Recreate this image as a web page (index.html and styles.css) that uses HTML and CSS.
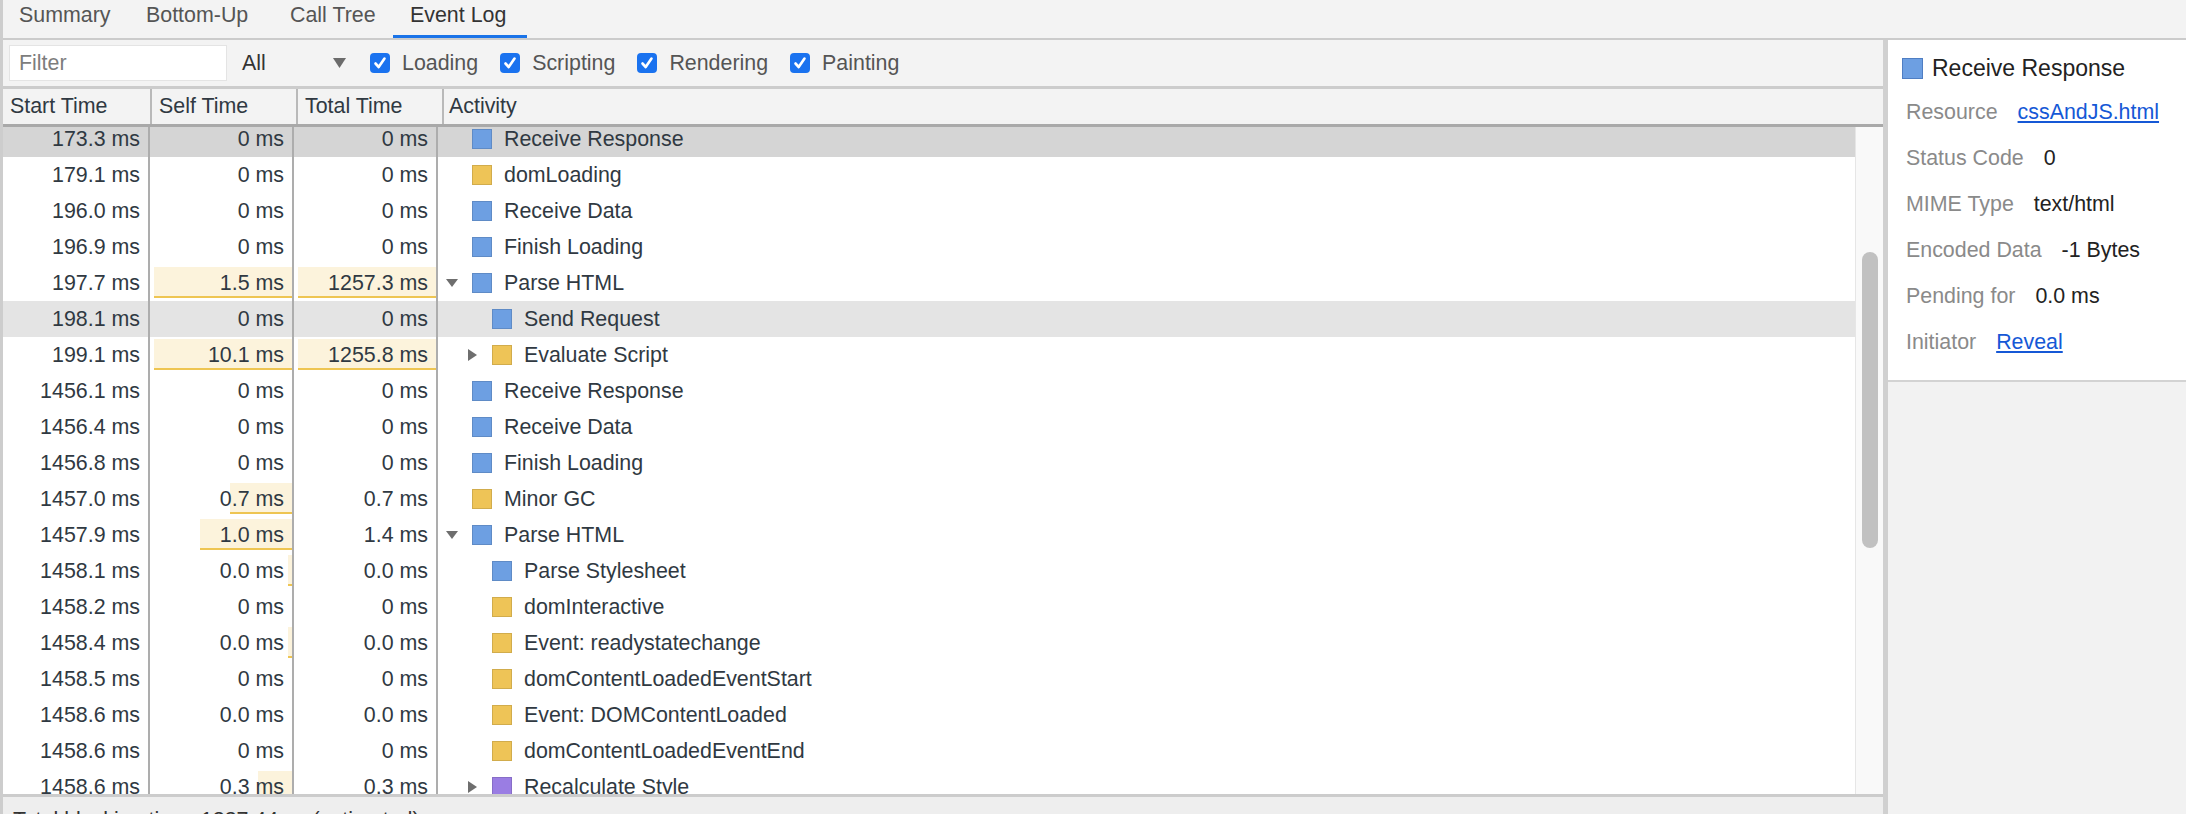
FILE: index.html
```html
<!DOCTYPE html>
<html>
<head>
<meta charset="utf-8">
<title>Event Log</title>
<link rel="stylesheet" href="styles.css">
</head>
<body>
<div class="app">
  <div class="tabbar">
    <div class="tab t-summary">Summary</div>
    <div class="tab t-bottom">Bottom-Up</div>
    <div class="tab t-call">Call Tree</div>
    <div class="tab t-event active">Event Log</div>
  </div>
  <div class="main">
    <div class="left">
      <div class="toolbar">
        <div class="filter">Filter</div>
        <div class="select"><span>All</span><svg width="13" height="10" viewBox="0 0 13 10"><polygon points="0,0 13,0 6.5,10" fill="#6b6b6b"/></svg></div>
        <label class="cb"><svg width="20" height="20" viewBox="0 0 20 20"><rect width="20" height="20" rx="4" fill="#1a72ef"/><path d="M5.5 10.5 L8.7 14 L14.5 5.5" fill="none" stroke="#fff" stroke-width="2.6" stroke-linecap="round" stroke-linejoin="round"/></svg><span>Loading</span></label>
        <label class="cb"><svg width="20" height="20" viewBox="0 0 20 20"><rect width="20" height="20" rx="4" fill="#1a72ef"/><path d="M5.5 10.5 L8.7 14 L14.5 5.5" fill="none" stroke="#fff" stroke-width="2.6" stroke-linecap="round" stroke-linejoin="round"/></svg><span>Scripting</span></label>
        <label class="cb"><svg width="20" height="20" viewBox="0 0 20 20"><rect width="20" height="20" rx="4" fill="#1a72ef"/><path d="M5.5 10.5 L8.7 14 L14.5 5.5" fill="none" stroke="#fff" stroke-width="2.6" stroke-linecap="round" stroke-linejoin="round"/></svg><span>Rendering</span></label>
        <label class="cb"><svg width="20" height="20" viewBox="0 0 20 20"><rect width="20" height="20" rx="4" fill="#1a72ef"/><path d="M5.5 10.5 L8.7 14 L14.5 5.5" fill="none" stroke="#fff" stroke-width="2.6" stroke-linecap="round" stroke-linejoin="round"/></svg><span>Painting</span></label>
      </div>
      <div class="ghead">
        <div class="hc">Start Time</div>
        <div class="hc">Self Time</div>
        <div class="hc">Total Time</div>
        <div class="hc last">Activity</div>
      </div>
      <div class="gbody">
        <div class="viewport">
          <div class="list">
            <div class="row sel"><div class="c">173.3 ms</div><div class="c">0 ms</div><div class="c">0 ms</div><div class="act d0"><span class="tw"></span><span class="sq load"></span><span class="nm">Receive Response</span></div></div>
            <div class="row"><div class="c">179.1 ms</div><div class="c">0 ms</div><div class="c">0 ms</div><div class="act d0"><span class="tw"></span><span class="sq script"></span><span class="nm">domLoading</span></div></div>
            <div class="row"><div class="c">196.0 ms</div><div class="c">0 ms</div><div class="c">0 ms</div><div class="act d0"><span class="tw"></span><span class="sq load"></span><span class="nm">Receive Data</span></div></div>
            <div class="row"><div class="c">196.9 ms</div><div class="c">0 ms</div><div class="c">0 ms</div><div class="act d0"><span class="tw"></span><span class="sq load"></span><span class="nm">Finish Loading</span></div></div>
            <div class="row"><div class="c">197.7 ms</div><div class="c"><span class="bar" style="width:138px"></span><span class="v">1.5 ms</span></div><div class="c"><span class="bar" style="width:138px"></span><span class="v">1257.3 ms</span></div><div class="act d0"><span class="tw"><svg width="12" height="8" viewBox="0 0 12 8"><polygon points="0,0 12,0 6,8" fill="#6e6e6e"/></svg></span><span class="sq load"></span><span class="nm">Parse HTML</span></div></div>
            <div class="row hov"><div class="c">198.1 ms</div><div class="c">0 ms</div><div class="c">0 ms</div><div class="act d1"><span class="tw"></span><span class="sq load"></span><span class="nm">Send Request</span></div></div>
            <div class="row"><div class="c">199.1 ms</div><div class="c"><span class="bar" style="width:138px"></span><span class="v">10.1 ms</span></div><div class="c"><span class="bar" style="width:138px"></span><span class="v">1255.8 ms</span></div><div class="act d1"><span class="tw"><svg width="9" height="12" viewBox="0 0 9 12"><polygon points="0,0 9,6 0,12" fill="#6e6e6e"/></svg></span><span class="sq script"></span><span class="nm">Evaluate Script</span></div></div>
            <div class="row"><div class="c">1456.1 ms</div><div class="c">0 ms</div><div class="c">0 ms</div><div class="act d0"><span class="tw"></span><span class="sq load"></span><span class="nm">Receive Response</span></div></div>
            <div class="row"><div class="c">1456.4 ms</div><div class="c">0 ms</div><div class="c">0 ms</div><div class="act d0"><span class="tw"></span><span class="sq load"></span><span class="nm">Receive Data</span></div></div>
            <div class="row"><div class="c">1456.8 ms</div><div class="c">0 ms</div><div class="c">0 ms</div><div class="act d0"><span class="tw"></span><span class="sq load"></span><span class="nm">Finish Loading</span></div></div>
            <div class="row"><div class="c">1457.0 ms</div><div class="c"><span class="bar" style="width:62px"></span><span class="v">0.7 ms</span></div><div class="c">0.7 ms</div><div class="act d0"><span class="tw"></span><span class="sq script"></span><span class="nm">Minor GC</span></div></div>
            <div class="row"><div class="c">1457.9 ms</div><div class="c"><span class="bar" style="width:92px"></span><span class="v">1.0 ms</span></div><div class="c">1.4 ms</div><div class="act d0"><span class="tw"><svg width="12" height="8" viewBox="0 0 12 8"><polygon points="0,0 12,0 6,8" fill="#6e6e6e"/></svg></span><span class="sq load"></span><span class="nm">Parse HTML</span></div></div>
            <div class="row"><div class="c">1458.1 ms</div><div class="c"><span class="bar" style="width:4px"></span><span class="v">0.0 ms</span></div><div class="c">0.0 ms</div><div class="act d1"><span class="tw"></span><span class="sq load"></span><span class="nm">Parse Stylesheet</span></div></div>
            <div class="row"><div class="c">1458.2 ms</div><div class="c">0 ms</div><div class="c">0 ms</div><div class="act d1"><span class="tw"></span><span class="sq script"></span><span class="nm">domInteractive</span></div></div>
            <div class="row"><div class="c">1458.4 ms</div><div class="c"><span class="bar" style="width:4px"></span><span class="v">0.0 ms</span></div><div class="c">0.0 ms</div><div class="act d1"><span class="tw"></span><span class="sq script"></span><span class="nm">Event: readystatechange</span></div></div>
            <div class="row"><div class="c">1458.5 ms</div><div class="c">0 ms</div><div class="c">0 ms</div><div class="act d1"><span class="tw"></span><span class="sq script"></span><span class="nm">domContentLoadedEventStart</span></div></div>
            <div class="row"><div class="c">1458.6 ms</div><div class="c">0.0 ms</div><div class="c">0.0 ms</div><div class="act d1"><span class="tw"></span><span class="sq script"></span><span class="nm">Event: DOMContentLoaded</span></div></div>
            <div class="row"><div class="c">1458.6 ms</div><div class="c">0 ms</div><div class="c">0 ms</div><div class="act d1"><span class="tw"></span><span class="sq script"></span><span class="nm">domContentLoadedEventEnd</span></div></div>
            <div class="row"><div class="c">1458.6 ms</div><div class="c"><span class="bar" style="width:34px"></span><span class="v">0.3 ms</span></div><div class="c">0.3 ms</div><div class="act d1"><span class="tw"><svg width="9" height="12" viewBox="0 0 9 12"><polygon points="0,0 9,6 0,12" fill="#6e6e6e"/></svg></span><span class="sq render"></span><span class="nm">Recalculate Style</span></div></div>
          </div>
        </div>
        <div class="vscroll"><div class="thumb"></div></div>
      </div>
      <div class="status">Total blocking time: 1237.44ms (estimated)</div>
    </div>
    <div class="right">
      <div class="details">
        <div class="dtitle"><span class="sq big load"></span><span>Receive Response</span></div>
        <div class="drow"><span class="lbl">Resource</span><a class="lnk">cssAndJS.html</a></div>
        <div class="drow"><span class="lbl">Status Code</span><span class="val">0</span></div>
        <div class="drow"><span class="lbl">MIME Type</span><span class="val">text/html</span></div>
        <div class="drow"><span class="lbl">Encoded Data</span><span class="val">-1 Bytes</span></div>
        <div class="drow"><span class="lbl">Pending for</span><span class="val">0.0 ms</span></div>
        <div class="drow"><span class="lbl">Initiator</span><a class="lnk">Reveal</a></div>
      </div>
      <div class="rest"></div>
    </div>
  </div>
</div>
</body>
</html>
```
FILE: styles.css
```css
* { box-sizing: border-box; }
html, body { margin: 0; padding: 0; }
body {
  width: 2186px;
  height: 814px;
  overflow: hidden;
  background: #f3f3f3;
  font-family: "Liberation Sans", Arial, Helvetica, sans-serif;
  font-size: 21.4px;
  color: #303942;
}
.app {
  height: 814px;
  border-left: 3px solid #cdcdcd;
  display: flex;
  flex-direction: column;
}

/* tabs */
.tabbar {
  flex: none;
  height: 40px;
  display: flex;
  border-bottom: 2px solid #cbcbcb;
  background: #f3f3f3;
}
.tab {
  height: 38px;
  line-height: 30px;
  padding-left: 17px;
  color: #555555;
  border-bottom: 3px solid transparent;
  white-space: nowrap;
}
.t-summary { width: 126px; padding-left: 16px; }
.t-bottom { width: 144px; }
.t-call { width: 120px; }
.t-event { width: 134px; }
.tab.active { color: #333333; border-bottom-color: #1a73e8; }

.main {
  flex: 1;
  display: flex;
  min-height: 0;
}
.left {
  width: 1880px;
  flex: none;
  display: flex;
  flex-direction: column;
}

/* toolbar */
.toolbar {
  flex: none;
  height: 49px;
  border-bottom: 3px solid #cccccc;
  display: flex;
  align-items: center;
  padding-left: 6px;
}
.filter {
  width: 218px;
  height: 36px;
  background: #ffffff;
  border: 1px solid #e4e4e4;
  padding-left: 9px;
  line-height: 34px;
  color: #7d7d7d;
}
.select {
  width: 104px;
  margin-left: 15px;
  margin-right: 24px;
  display: flex;
  justify-content: space-between;
  align-items: center;
  color: #333333;
}
.cb {
  display: flex;
  align-items: center;
  color: #555555;
  margin-right: 22px;
}
.cb svg { flex: none; display: block; }
.cb span { margin-left: 12px; }

/* grid header */
.ghead {
  flex: none;
  height: 38px;
  border-bottom: 3px solid #a9a9a9;
  display: grid;
  grid-template-columns: 149px 146px 146px 1fr;
}
.hc {
  border-right: 2px solid #b9b9b9;
  padding-left: 7px;
  line-height: 35px;
  white-space: nowrap;
}
.hc.last { border-right: none; padding-left: 5px; }

/* grid body */
.gbody {
  flex: 1;
  min-height: 0;
  display: flex;
  background: #ffffff;
}
.viewport {
  flex: 1;
  overflow: hidden;
}
.list { margin-top: -6px; }
.row {
  height: 36px;
  display: grid;
  grid-template-columns: 147px 144px 144px 1fr;
  background: #ffffff;
}
.row.sel { background: #d5d5d5; }
.row.hov { background: #e4e4e4; }
.c {
  position: relative;
  height: 36px;
  line-height: 36px;
  text-align: right;
  padding-right: 8px;
  border-right: 2px solid #adadad;
  white-space: nowrap;
  overflow: hidden;
}
.bar {
  position: absolute;
  right: 0;
  top: 2px;
  height: 31px;
  background: #fcf3dc;
  border-bottom: 2px solid #eec552;
}
.v { position: relative; }
.act {
  display: flex;
  align-items: center;
  height: 36px;
  white-space: nowrap;
}
.act.d0 { padding-left: 8px; }
.act.d1 { padding-left: 28px; }
.tw {
  width: 12px;
  flex: none;
  display: flex;
  justify-content: center;
  align-items: center;
}
.tw svg { display: block; }
.sq {
  flex: none;
  width: 20px;
  height: 20px;
  margin-left: 14px;
  margin-right: 12px;
  border: 1px solid rgba(0, 0, 0, 0.12);
}
.sq.load { background: #6d9fe2; }
.sq.script { background: #eec457; }
.sq.render { background: #9a7de3; }

.vscroll {
  width: 28px;
  flex: none;
  background: #f9f9f9;
  border-left: 1px solid #e6e6e6;
  padding-top: 125px;
  padding-left: 6px;
}
.thumb {
  width: 16px;
  height: 296px;
  border-radius: 8px;
  background: #c1c1c1;
}

.status {
  flex: none;
  height: 20px;
  border-top: 3px solid #cccccc;
  background: #eeeeee;
  padding-left: 10px;
  padding-top: 11px;
  line-height: 24px;
  white-space: nowrap;
  overflow: hidden;
  color: #333333;
}

/* details */
.right {
  flex: 1;
  display: flex;
  flex-direction: column;
  border-left: 5px solid #d0d0d0;
  background: #f2f2f2;
}
.details {
  flex: none;
  height: 342px;
  background: #ffffff;
  border-bottom: 2px solid #d3d3d3;
  padding: 10px 0 0 14px;
}
.dtitle {
  height: 36px;
  display: flex;
  align-items: center;
  font-size: 23px;
  color: #222222;
}
.sq.big {
  width: 21px;
  height: 21px;
  margin-left: 0;
  margin-right: 9px;
  border: 1px solid #4f7ec3;
}
.drow {
  height: 46px;
  display: flex;
  align-items: center;
  padding-left: 4px;
  white-space: nowrap;
}
.drow:first-of-type { margin-top: 3px; }
.dtitle + .drow { margin-top: 3px; }
.lbl { color: #8a8a8a; margin-right: 20px; }
.val { color: #222222; }
.lnk { color: #1558d6; text-decoration: underline; }
.rest { flex: 1; }
```
